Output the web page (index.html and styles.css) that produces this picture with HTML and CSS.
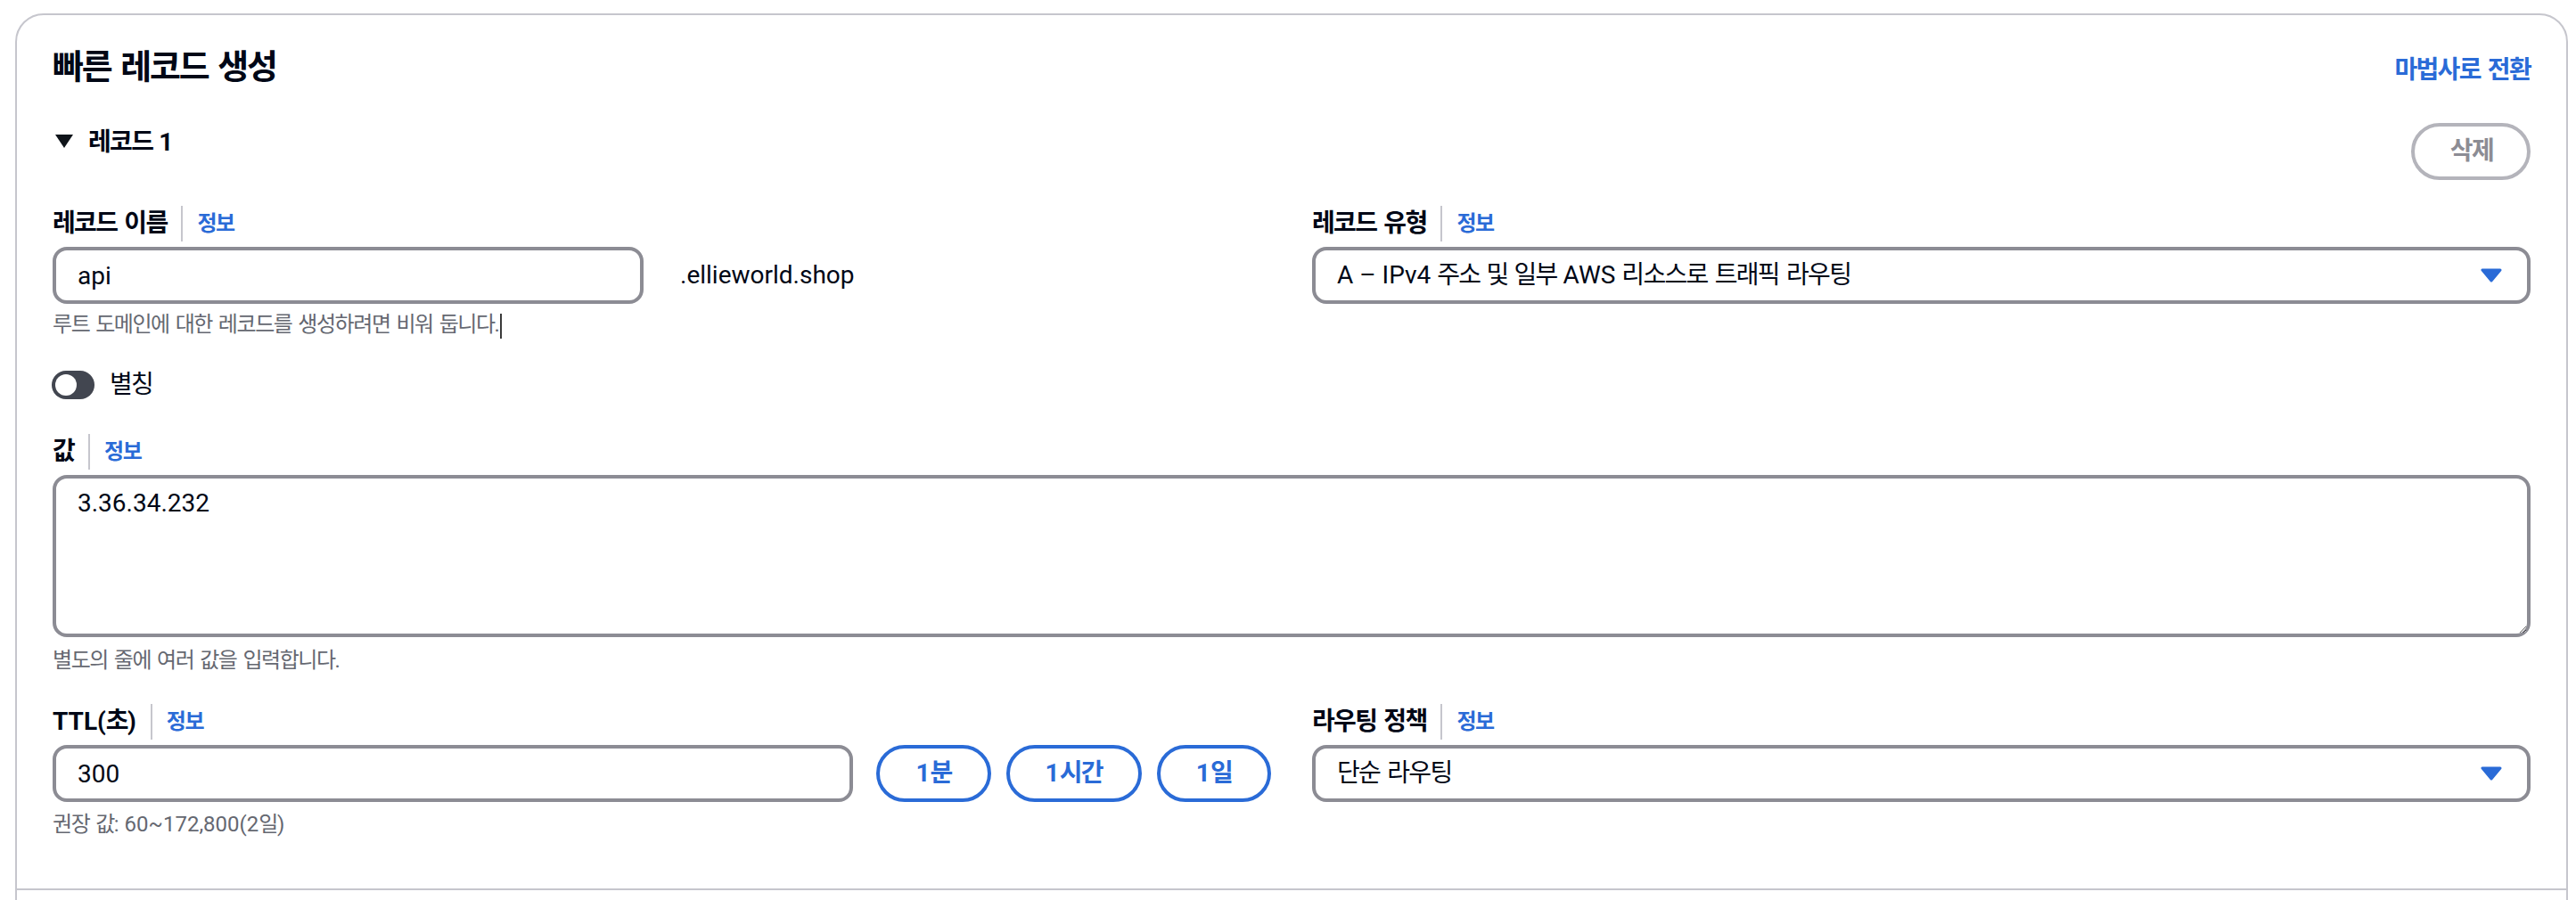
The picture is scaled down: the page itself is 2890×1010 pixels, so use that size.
FILE: index.html
```html
<!DOCTYPE html>
<html lang="ko">
<head>
<meta charset="utf-8">
<title>빠른 레코드 생성</title>
<link rel="stylesheet" href="styles.css">
</head>
<body>
<div class="card">
  <div class="card-header">
    <h2 class="title k">빠른 레코드 생성</h2>
    <a class="wizard k" href="#">마법사로 전환</a>
  </div>

  <div class="record">
    <div class="record-head">
      <div class="record-title"><span class="caret"></span><span class="k">레코드</span>&nbsp;1</div>
      <button class="btn-disabled k" type="button">삭제</button>
    </div>

    <div class="grid2 first-row">
      <div class="field">
        <div class="label-row"><span class="label k">레코드 이름</span><span class="sep"></span><a class="info k" href="#">정보</a></div>
        <div class="name-row control">
          <input class="input name-input" type="text" value="api">
          <span class="suffix">.ellieworld.shop</span>
        </div>
        <div class="hint k">루트 도메인에 대한 레코드를 생성하려면 비워 둡니다.<span class="ibeam"></span></div>
      </div>
      <div class="field">
        <div class="label-row"><span class="label k">레코드 유형</span><span class="sep"></span><a class="info k" href="#">정보</a></div>
        <div class="select control">
          <span class="select-text">A – IPv4 <span class="k">주소</span> <span class="k">및</span> <span class="k">일부</span> AWS <span class="k">리소스로 트래픽 라우팅</span></span>
          <svg class="arrow" width="24" height="16" viewBox="0 0 24 16"><path d="M2 2 H22 L12 14 Z" fill="#2a6bd7" stroke="#2a6bd7" stroke-width="3" stroke-linejoin="round"/></svg>
        </div>
      </div>
    </div>

    <div class="toggle-row">
      <span class="toggle"><span class="knob"></span></span>
      <span class="toggle-label k">별칭</span>
    </div>

    <div class="field value-field">
      <div class="label-row"><span class="label k">값</span><span class="sep"></span><a class="info k" href="#">정보</a></div>
      <textarea class="textarea control" readonly>3.36.34.232</textarea>
      <div class="hint hint-ta k">별도의 줄에 여러 값을 입력합니다.</div>
    </div>

    <div class="grid2 ttl-row">
      <div class="field">
        <div class="label-row"><span class="label">TTL(<span class="k">초</span>)</span><span class="sep"></span><a class="info k" href="#">정보</a></div>
        <div class="ttl-controls control">
          <input class="input ttl-input" type="text" value="300">
          <button class="btn-blue" type="button">1<span class="k">분</span></button>
          <button class="btn-blue" type="button">1<span class="k">시간</span></button>
          <button class="btn-blue" type="button">1<span class="k">일</span></button>
        </div>
        <div class="hint hint-ttl"><span class="k">권장 값</span>: 60~172,800(2<span class="k">일</span>)</div>
      </div>
      <div class="field">
        <div class="label-row"><span class="label k">라우팅 정책</span><span class="sep"></span><a class="info k" href="#">정보</a></div>
        <div class="select control">
          <span class="select-text k">단순 라우팅</span>
          <svg class="arrow" width="24" height="16" viewBox="0 0 24 16"><path d="M2 2 H22 L12 14 Z" fill="#2a6bd7" stroke="#2a6bd7" stroke-width="3" stroke-linejoin="round"/></svg>
        </div>
      </div>
    </div>
  </div>

  <div class="divider"></div>
  <div class="card-rest"></div>
</div>
</body>
</html>
```

FILE: styles.css
```css
* {
  box-sizing: border-box;
}

html,
body {
  margin: 0;
  background: #ffffff;
}

body {
  padding: 15px 9px 0 17px;
  font-family: Roboto, "Noto Sans CJK KR", sans-serif;
  font-size: 28px;
  line-height: 40px;
  color: #000716;
}

.k {
  letter-spacing: -0.06em;
  word-spacing: 0.1em;
}

.card {
  border: 2px solid #c6c6cd;
  border-radius: 32px;
  background: #ffffff;
}

.card-header {
  display: flex;
  justify-content: space-between;
  align-items: flex-start;
  padding: 36px 40px 0 40px;
}

.title {
  margin: 0;
  font-size: 38px;
  line-height: 44px;
  font-weight: 700;
}

.wizard {
  margin-top: 6px;
  font-weight: 700;
  color: #2a6bd7;
  text-decoration: none;
}

.record {
  padding: 0 40px;
}

.record-head {
  display: flex;
  justify-content: space-between;
  align-items: flex-start;
  margin-top: 39px;
}

.record-title {
  display: flex;
  align-items: center;
  font-weight: 700;
  line-height: 44px;
}

.caret {
  width: 0;
  height: 0;
  margin: 0 17px 4px 3px;
  border-left: 10px solid transparent;
  border-right: 10px solid transparent;
  border-top: 15px solid #0f141a;
}

.btn-disabled {
  height: 64px;
  padding: 0 38px 0 40px;
  border: 4px solid #b4b4bb;
  border-radius: 32px;
  background: #ffffff;
  color: #8c8c94;
  font-family: inherit;
  font-size: 28px;
  font-weight: 700;
  line-height: 40px;
}

.grid2 {
  display: grid;
  grid-template-columns: 1fr 1fr;
  column-gap: 46px;
}

.first-row {
  margin-top: 27px;
}

.label-row {
  display: flex;
  align-items: center;
  height: 44px;
}

.label {
  font-weight: 700;
  line-height: 44px;
}

.sep {
  width: 2px;
  height: 40px;
  margin: 0 16px 0 16px;
  background: #c6c6cd;
}

.info {
  font-size: 24px;
  line-height: 32px;
  font-weight: 700;
  color: #2a6bd7;
  text-decoration: none;
}

.control {
  margin-top: 4px;
}

.input {
  height: 64px;
  padding: 0 24px;
  border: 4px solid #8c8c94;
  border-radius: 16px;
  background: #ffffff;
  font-family: inherit;
  font-size: 28px;
  color: #000716;
  outline: none;
}

.name-row {
  display: flex;
  align-items: center;
}

.name-input {
  width: 663px;
}

.suffix {
  margin-left: 41px;
}

.hint {
  margin-top: 7px;
  font-size: 24px;
  line-height: 32px;
  color: #656871;
}

.ibeam {
  display: inline-block;
  width: 2px;
  height: 28px;
  margin-left: 2px;
  vertical-align: middle;
  background: #3a3a3a;
}

.select {
  display: flex;
  align-items: center;
  justify-content: space-between;
  height: 64px;
  padding: 0 28px 0 24px;
  border: 4px solid #8c8c94;
  border-radius: 16px;
}

.arrow {
  display: block;
}

.toggle-row {
  display: flex;
  align-items: center;
  height: 40px;
  margin-top: 32px;
}

.toggle {
  position: relative;
  width: 48px;
  height: 32px;
  margin-left: -1px;
  border-radius: 16px;
  background: #424650;
}

.knob {
  position: absolute;
  left: 4px;
  top: 4px;
  width: 24px;
  height: 24px;
  border-radius: 50%;
  background: #ffffff;
}

.toggle-label {
  margin-left: 17px;
}

.value-field {
  margin-top: 33px;
}

.textarea {
  display: block;
  width: 100%;
  height: 182px;
  padding: 8px 24px;
  border: 4px solid #8c8c94;
  border-radius: 16px;
  font-family: inherit;
  font-size: 28px;
  line-height: 40px;
  color: #000716;
  resize: vertical;
  outline: none;
}

.hint-ta {
  margin-top: 10px;
}

.ttl-row {
  margin-top: 31px;
}

.ttl-controls {
  display: flex;
  align-items: center;
  gap: 17px;
}

.ttl-input {
  flex: 1;
  min-width: 0;
  margin-right: 9px;
}

.btn-blue {
  height: 64px;
  padding: 0 40px;
  border: 4px solid #2a6bd7;
  border-radius: 32px;
  background: #ffffff;
  color: #2a6bd7;
  font-family: inherit;
  font-size: 28px;
  font-weight: 700;
  line-height: 40px;
}

.hint-ttl {
  margin-top: 9px;
}

.divider {
  height: 2px;
  margin-top: 56px;
  background: #c6c6cd;
}

.card-rest {
  height: 80px;
}
```
